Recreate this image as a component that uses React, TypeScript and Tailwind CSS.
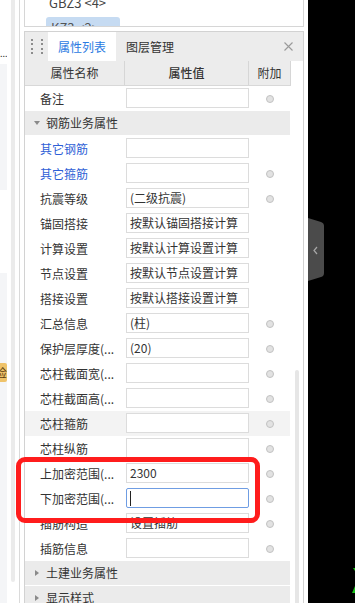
import React from 'react';

type Row = {
    name: string;
    value?: string;
    blue?: boolean;
    dot?: boolean;
    shade?: boolean;
    focused?: boolean;
};

const rebarRows: Row[] = [
    { name: '其它钢筋', blue: true },
    { name: '其它箍筋', blue: true, dot: true },
    { name: '抗震等级', value: '(二级抗震)', dot: true },
    { name: '锚固搭接', value: '按默认锚固搭接计算' },
    { name: '计算设置', value: '按默认计算设置计算' },
    { name: '节点设置', value: '按默认节点设置计算' },
    { name: '搭接设置', value: '按默认搭接设置计算' },
    { name: '汇总信息', value: '(柱)', dot: true },
    { name: '保护层厚度(...', value: '(20)', dot: true },
    { name: '芯柱截面宽(...', dot: true },
    { name: '芯柱截面高(...', dot: true },
    { name: '芯柱箍筋', dot: true, shade: true },
    { name: '芯柱纵筋', dot: true },
    { name: '上加密范围(...', value: '2300', dot: true },
    { name: '下加密范围(...', dot: true, focused: true },
    { name: '插筋构造', value: '设置插筋', dot: true },
    { name: '插筋信息', dot: true },
];

const PropRow = ({ name, value, blue, dot, shade, focused }: Row) => (
    <div className={`flex h-[25px] w-[265px] ${shade ? 'bg-[#f3f3f3]' : ''}`}>
        <div className={`w-[100px] pl-[15px] leading-[25px] whitespace-nowrap ${blue ? 'text-[#2f5fd6]' : 'text-[#333]'}`}>
            {name}
        </div>
        <div className="w-[124px] pt-[2px] pl-[1px]">
            {focused ? (
                <div className="flex h-[20px] w-[123px] items-center rounded-[2px] border border-[#6f9de3] bg-white pl-[3px]">
                    <span className="h-[15px] w-[1px] bg-[#222]" />
                </div>
            ) : (
                <div className="h-[20px] w-[123px] border border-[#dcdcdc] bg-white pl-[3px] leading-[18px] whitespace-nowrap text-[#333]">
                    {value}
                </div>
            )}
        </div>
        <div className="flex w-[41px] items-center justify-center">
            {dot && <span className="h-[8px] w-[8px] rounded-full border border-[#c2c2c2] bg-[#e2e2e2]" />}
        </div>
    </div>
);

const GroupRow = ({ title, open }: { title: string; open?: boolean }) => (
    <div className="flex h-[25px] w-[265px] items-center border-b border-white bg-[#ebebeb] text-[#333]">
        <div className="flex w-[21px] justify-center pl-[2px]">
            {open ? (
                <svg width="6" height="4" viewBox="0 0 6 4">
                    <path d="M0 0 L6 0 L3 4 Z" fill="#8a8a8a" />
                </svg>
            ) : (
                <svg width="4" height="6" viewBox="0 0 4 6">
                    <path d="M0 0 L4 3 L0 6 Z" fill="#8a8a8a" />
                </svg>
            )}
        </div>
        <span>{title}</span>
    </div>
);

const App = () => {
    return (
        <div
            className="relative flex h-[603px] w-[355px] overflow-hidden bg-white text-[12px]"
            style={{ fontFamily: '"Noto Sans CJK SC", "Noto Sans", sans-serif' }}
        >
            {/* left strip */}
            <div className="flex h-full w-[24px] shrink-0">
                <div className="flex w-[7px] flex-col overflow-hidden">
                    <div className="flex h-[64px] flex-col justify-end pb-[8px]">
                        <span className="text-[9px] leading-[4px] text-[#333]">...</span>
                    </div>
                    <div className="h-[126px] bg-[#f4f5f7]" />
                    <div className="h-[83px]" />
                    <div className="flex-1 bg-[#f4f5f7] pt-[90px]">
                        <div className="h-[19px] w-[7px] overflow-hidden rounded-r-[2px] bg-[#efc36a] leading-[19px]">
                            <span className="ml-[-5px] text-[#5a3b10]">检</span>
                        </div>
                    </div>
                </div>
                <div className="w-[4px]" />
                <div className="h-[582px] w-[4px] rounded-b-[2px] bg-[#ebebeb]" />
                <div className="w-[4px]" />
                <div className="w-[1px] bg-[#dadada]" />
                <div className="w-[4px]" />
            </div>

            {/* main column */}
            <div className="flex w-[280px] shrink-0 flex-col">
                <div className="h-[27px] overflow-hidden border-r border-b border-l border-[#d6d6d6]">
                    <div className="mt-[-4px] pl-[24px] text-[13px] leading-[14px] text-[#444]">GBZ3 &lt;4&gt;</div>
                    <div className="mt-[7px] ml-[21px] h-[12px] w-[74px] overflow-hidden rounded-t-[3px] bg-[#c6dbf2] pl-[5px] text-[13px] leading-[22px] text-[#555]">
                        KZ3 &lt;2&gt;
                    </div>
                </div>

                <div className="mt-[4px] flex flex-1 flex-col overflow-hidden border-t border-r border-l border-[#d2d2d2]">
                    <div className="flex h-[29px] shrink-0 items-stretch bg-[#ececec]">
                        <div className="grid w-[23px] grid-cols-2 content-center justify-start gap-x-[2px] gap-y-[2.5px] pl-[6px]">
                            {Array.from({ length: 8 }).map((_, i) => (
                                <span key={i} className="h-[2px] w-[2px] bg-[#8c8c8c]" />
                            ))}
                        </div>
                        <div className="flex w-[68px] items-center justify-center bg-white text-[#2a7ae2]">属性列表</div>
                        <div className="ml-[10px] flex items-center text-[#333]">图层管理</div>
                        <div className="ml-auto flex items-center pr-[10px]">
                            <svg width="9" height="9" viewBox="0 0 9 9">
                                <path d="M0.5 0.5 L8.5 8.5 M8.5 0.5 L0.5 8.5" stroke="#9a9a9a" strokeWidth="1.1" />
                            </svg>
                        </div>
                    </div>

                    <div className="flex h-[25px] w-[266px] shrink-0 border-b border-[#d8d8d8] bg-[#ececec] text-[#333]">
                        <div className="flex w-[100px] items-center justify-center border-r border-[#d6d6d6]">属性名称</div>
                        <div className="flex w-[124px] items-center justify-center border-r border-[#d6d6d6] font-medium">属性值</div>
                        <div className="flex w-[42px] items-center justify-center border-r border-[#d6d6d6]">附加</div>
                    </div>

                    <div className="flex">
                        <div className="flex w-[266px] flex-col">
                            <PropRow name="备注" dot />
                            <GroupRow title="钢筋业务属性" open />
                            {rebarRows.map((r) => (
                                <PropRow key={r.name} {...r} />
                            ))}
                            <GroupRow title="土建业务属性" />
                            <GroupRow title="显示样式" />
                        </div>
                        <div className="w-[12px] pt-[284px] pl-[4px]">
                            <div className="h-[260px] w-[4px] rounded-[2px] bg-[#e6e6e6]" />
                        </div>
                    </div>
                </div>
            </div>

            <div className="w-[4px] shrink-0" />

            {/* viewport */}
            <div className="relative flex w-[47px] shrink-0 flex-col bg-black pt-[218px]">
                <svg width="17" height="63" viewBox="0 0 17 63">
                    <path d="M0 0 L13 4 Q16 5 16 8 L16 55 Q16 58 13 59 L0 63 Z" fill="#4b4b4b" />
                    <path d="M9 29 L6 32.5 L9 36" stroke="#a8a8a8" strokeWidth="1.2" fill="none" />
                </svg>
                <svg className="absolute right-0 bottom-[10px]" width="3" height="25" viewBox="0 0 3 25">
                    <path d="M1 0 L3 0 L3 3 Z" fill="#18c318" />
                    <path d="M0 25 L3 18 L3 25 Z" fill="#18c318" />
                </svg>
            </div>

            {/* annotation */}
            <div className="absolute top-[457px] left-[16px] h-[66px] w-[244px] rounded-[9px] border-[5px] border-[#ff1c1c]" />
        </div>
    );
};

export default App;
